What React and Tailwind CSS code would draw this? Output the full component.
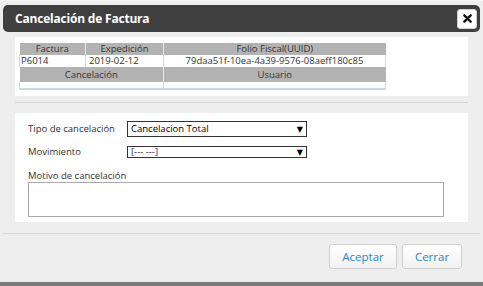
import React from 'react';

const font = { fontFamily: '"Open Sans", "DejaVu Sans", sans-serif' };

const App = () => {
    return (
        <div className="w-[483px] h-[286px] bg-[#787878] overflow-hidden" style={font}>
            <div className="h-[282px] bg-[#eeeeee] pt-[4px] px-[3px] border-t border-[#f7f7f7]">
                {/* title bar */}
                <div className="h-[27px] rounded-[5px] bg-[#3f3f3f] flex items-center justify-between pl-[12px] pr-[3px]">
                    <span className="text-white text-[12px] font-bold tracking-[-0.2px]">Cancelación de Factura</span>
                    <button className="w-[20px] h-[20px] bg-white rounded-[3px] border border-[#d0d0d0] flex items-center justify-center">
                        <svg className="w-[9px] h-[9px]" viewBox="0 0 10 10">
                            <path d="M1.5 1.5L8.5 8.5M8.5 1.5L1.5 8.5" stroke="#111" strokeWidth="2.6" strokeLinecap="round" />
                        </svg>
                    </button>
                </div>

                {/* invoice table */}
                <div className="ml-[12px] mt-[5px] w-[453px] h-[59px] bg-white pl-[4px] pt-[6px]">
                    <table className="w-[367px] border-collapse text-[9.5px] text-[#333]">
                        <tbody>
                            <tr className="bg-[#b3b3b3]">
                                <td className="w-[66px] h-[12px] p-0 leading-[12px] text-center border-r border-[#e4ecec]">Factura</td>
                                <td className="w-[78px] h-[12px] p-0 leading-[12px] text-center border-r border-[#e4ecec]">Expedición</td>
                                <td className="h-[12px] p-0 leading-[12px] text-center">Folio Fiscal(UUID)</td>
                            </tr>
                            <tr className="bg-white">
                                <td className="h-[12px] p-0 pl-[1px] leading-[12px] border-l border-r border-[#c5dcdc]">P6014</td>
                                <td className="h-[12px] p-0 pl-[3px] leading-[12px] border-r border-[#c5dcdc]">2019-02-12</td>
                                <td className="h-[12px] p-0 leading-[12px] text-center border-r border-[#c5dcdc]">79daa51f-10ea-4a39-9576-08aeff180c85</td>
                            </tr>
                            <tr className="bg-[#b3b3b3]">
                                <td colSpan={2} className="h-[15px] p-0 leading-[14px] text-center border-r border-[#e4ecec]">Cancelación</td>
                                <td className="h-[15px] p-0 leading-[14px] text-center">Usuario</td>
                            </tr>
                            <tr className="bg-white">
                                <td colSpan={2} className="h-[7px] p-0 border-l border-r border-b-2 border-[#c5dcdc]"></td>
                                <td className="h-[7px] p-0 border-r border-b-2 border-[#c5dcdc]"></td>
                            </tr>
                        </tbody>
                    </table>
                </div>

                <div className="ml-[12px] mt-[6px] w-[453px] h-px bg-[#d6d6d6]"></div>

                {/* form */}
                <div className="ml-[12px] mt-[10px] w-[453px] h-[109px] bg-white pl-[13px] pt-[8px] text-[9.5px] text-[#333]">
                    <div className="flex items-center h-[16px]">
                        <span className="w-[99px]">Tipo de cancelación</span>
                        <div className="w-[180px] h-[16px] border border-[#333] flex items-center justify-between px-[3px] text-black">
                            <span>Cancelacion Total</span>
                            <span className="text-[8px]">▼</span>
                        </div>
                    </div>
                    <div className="flex items-center h-[12px] mt-[9px]">
                        <span className="w-[99px]">Movimiento</span>
                        <div className="w-[180px] h-[12px] border border-[#333] flex items-center justify-between px-[3px] text-[#2d1a55] leading-none">
                            <span>[--- ---]</span>
                            <span className="text-[8px] text-black">▼</span>
                        </div>
                    </div>
                    <div className="mt-[12px] leading-[12px]">Motivo de cancelación</div>
                    <div className="w-[416px] h-[35px] border border-[#aaa] bg-white"></div>
                </div>

                <div className="mt-[11px] h-px bg-[#d6d6d6]"></div>

                {/* buttons */}
                <div className="flex justify-end gap-[5px] pr-[18px] mt-[10px]">
                    <button className="w-[68px] h-[25px] rounded-[3px] border border-[#cfcfcf] bg-gradient-to-b from-white to-[#f2f2f2] text-[#2a86c8] text-[11.5px]">Aceptar</button>
                    <button className="w-[60px] h-[25px] rounded-[3px] border border-[#cfcfcf] bg-gradient-to-b from-white to-[#f2f2f2] text-[#2a86c8] text-[11.5px]">Cerrar</button>
                </div>
            </div>
        </div>
    );
};

export default App;
